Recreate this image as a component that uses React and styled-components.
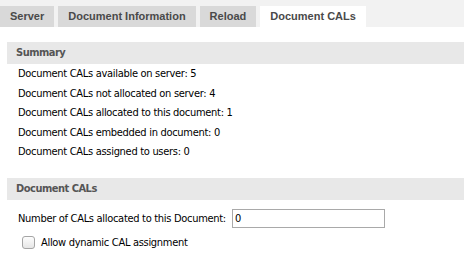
import React, { useState } from "react";
import styled, { createGlobalStyle } from "styled-components";

const GlobalStyle = createGlobalStyle`
  body {
    margin: 0;
    background: #fff;
    font-family: "DejaVu Sans Condensed", "DejaVu Sans", sans-serif;
  }
`;

const tabs = ["Server", "Document Information", "Reload", "Document CALs"];

const summary = [
  ["Document CALs available on server", 5],
  ["Document CALs not allocated on server", 4],
  ["Document CALs allocated to this document", 1],
  ["Document CALs embedded in document", 0],
  ["Document CALs assigned to users", 0],
];

const App = () => {
  const [active, setActive] = useState(3);
  const [count, setCount] = useState("0");
  const [dynamic, setDynamic] = useState(false);

  return (
    <>
      <GlobalStyle />
      <TabBar>
        {tabs.map((t, i) => (
          <Tab key={t} $active={i === active} onClick={() => setActive(i)}>
            {t}
          </Tab>
        ))}
      </TabBar>
      <Content>
        <Section>
          <Header>Summary</Header>
          <List>
            {summary.map(([label, value]) => (
              <Line key={label}>
                {label}: {value}
              </Line>
            ))}
          </List>
        </Section>
        <Section>
          <Header>Document CALs</Header>
          <Field>
            <span>Number of CALs allocated to this Document:</span>
            <Input value={count} onChange={(e) => setCount(e.target.value)} />
          </Field>
          <Check>
            <Box
              type="checkbox"
              checked={dynamic}
              onChange={(e) => setDynamic(e.target.checked)}
            />
            <span>Allow dynamic CAL assignment</span>
          </Check>
        </Section>
        <Header />
      </Content>
    </>
  );
};

export default App;

const TabBar = styled.div`
  display: flex;
  gap: 4px;
  height: 27px;
  padding-top: 6px;
  box-sizing: border-box;
  background-color: #f2f2f2;
`;

const Tab = styled.div`
  height: 21px;
  line-height: 21px;
  padding: 0 10px;
  font-family: "Liberation Sans", Arial, sans-serif;
  font-size: 11px;
  font-weight: bold;
  color: #4a4a4a;
  background-color: ${(p) => (p.$active ? "#fff" : "#d9d9d9")};
  cursor: pointer;
`;

const Content = styled.div`
  padding: 15px 0 0 7px;
  letter-spacing: -0.3px;
`;

const Section = styled.div`
  margin-bottom: 16px;
`;

const Header = styled.div`
  height: 22px;
  line-height: 22px;
  padding-left: 9px;
  background-color: #e8e8e8;
  font-size: 11px;
  font-weight: bold;
  letter-spacing: -0.5px;
  color: #555;
`;

const List = styled.div`
  padding-left: 11px;
`;

const Line = styled.div`
  font-size: 11px;
  line-height: 19.6px;
  color: #000;
`;

const Field = styled.div`
  display: flex;
  align-items: center;
  padding: 9px 0 0 11px;
  font-size: 11px;
  color: #000;
  span {
    margin-right: 6px;
  }
`;

const Input = styled.input`
  width: 153px;
  height: 19px;
  box-sizing: border-box;
  margin: 0;
  padding: 0 2px;
  border: 1px solid #a9a9a9;
  font-family: "DejaVu Sans Condensed", "DejaVu Sans", sans-serif;
  font-size: 11px;
  color: #000;
  outline: none;
`;

const Check = styled.label`
  display: flex;
  align-items: center;
  gap: 6px;
  padding: 8px 0 0 15px;
  font-size: 11px;
  color: #000;
`;

const Box = styled.input`
  appearance: none;
  width: 13px;
  height: 13px;
  margin: 0;
  border: 1px solid #a5a5a5;
  border-radius: 3px;
  background: linear-gradient(#fdfdfd, #e6e6e6);
`;
